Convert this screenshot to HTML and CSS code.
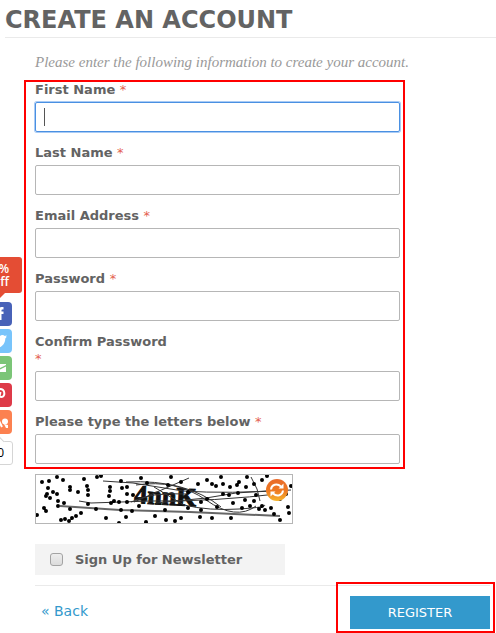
FILE: index.html
```html
<!DOCTYPE html>
<html lang="en">
<head>
<meta charset="UTF-8">
<meta name="viewport" content="width=device-width, initial-scale=1">
<title>Create an Account</title>

<link rel="stylesheet" href="styles.css">

</head>
<body>

<aside class="share">
    <div class="share-offer">%<br>Off</div>
    <a class="share-btn facebook" href="#" aria-label="Facebook">
        <svg viewBox="0 0 24 24"><path d="M10.500 18v-6H8.500V9.500h2V8c0-2 1.500-3 3-3h2v2.500H14.500c-.8 0-1 .3-1 1v1h2V12h-2v6z"/></svg>
    </a>
    <a class="share-btn twitter" href="#" aria-label="Twitter">
        <svg viewBox="0 0 24 24"><path d="M19 7.500l-1.700 1.900c0 6-4.800 9.600-9.300 9.600-2 0-3.500-.6-4.500-1.400 2 0 3.400-.5 4.300-1.300-1.500-.2-2.500-1-2.900-2.300h1.300C4.700 13.300 4 12 4 10.500l1.300.4C4.100 9.800 3.900 8.200 4.700 7c1.700 2 3.900 3 6.600 3.200C10.900 7.500 12.600 6 14.400 6c1 0 1.800.4 2.400 1l2-.7-1.100 1.600z"/></svg>
    </a>
    <a class="share-btn email" href="#" aria-label="Email">
        <svg viewBox="0 0 24 24"><path d="M6 8h12v1l-6 3-6-3zM6 10.500l6 3 6-3V16H6z"/></svg>
    </a>
    <a class="share-btn pinterest" href="#" aria-label="Pinterest">
        <svg viewBox="0 0 24 24"><path class="line" d="M9 13.500C5.500 9.500 8.500 6 12 6c5.500 0 5.500 8 1.500 8-1.500 0-2-.7-2-1.500M12.500 9L10 19"/></svg>
    </a>
    <a class="share-btn other" href="#" aria-label="More">
        <svg viewBox="0 0 24 24"><path class="line" d="M9 7l3 6 2 4"/><circle cx="17" cy="11.500" r="3"/><path d="M16 14l4 1v3h-2z"/></svg>
    </a>
    <div class="share-count">0</div>
</aside>

<main>
    <h1>Create an Account</h1>

    <form class="account">
        <p class="intro">Please enter the following information to create your account.</p>

        <div class="fields marked">
            <div class="field">
                <label for="firstName">First Name <span class="required">*</span></label>
                <input class="active" type="text" id="firstName" name="firstName">
            </div>
            <div class="field">
                <label for="lastName">Last Name <span class="required">*</span></label>
                <input type="text" id="lastName" name="lastName">
            </div>
            <div class="field">
                <label for="email">Email Address <span class="required">*</span></label>
                <input type="email" id="email" name="email">
            </div>
            <div class="field">
                <label for="password">Password <span class="required">*</span></label>
                <input type="password" id="password" name="password">
            </div>
            <div class="field">
                <label for="confirm">Confirm Password<br><span class="required">*</span></label>
                <input type="password" id="confirm" name="confirm">
            </div>
            <div class="field">
                <label for="captcha">Please type the letters below <span class="required">*</span></label>
                <input type="text" id="captcha" name="captcha">
            </div>
        </div>

        <div class="captcha">
            <svg class="captcha-image" viewBox="0 0 256 48">
                <text x="98" y="28" transform="rotate(3 98 28)">4nnK</text>
                <g class="strokes">
                    <path d="M67 6l30 2 50 8q45 3 108-1"/>
                    <path d="M90 7q60-3 95 25"/>
                    <path d="M43 26l12 2 60-2q60 1 135-8"/>
                    <path d="M100 10q40-6 70 15t50 6"/>
                    <path d="M98 27l55-24M120 28l50-5 30-5 30-2"/>
                    <path d="M215 2l6 12 3 12"/>
                    <path d="M95 27q20-10 55-8"/>
                    <path d="M118 12l30 18q25 6 55 4t25-4"/>
                </g>
                <path class="thick" d="M24 31l60 4 70 2 90 4"/>
                <path class="dots" d="M6 7h0M13 6h0M21 2h0M12 13h0M17 17h0M11 19h0M10 21h0M14 23h0M21 19h0M27 5h0M34 12h0M34 15h0M42 17h0M48 4h0M51 11h0M52 20h0M52 15h0M61 2h0M65 1h0M74 12h0M74 16h0M73 21h0M85 6h0M86 13h0M91 12h0M91 19h0M97 20h0M105 3h0M111 8h0M22 26h0M28 28h0M22 31h0M8 33h0M10 36h0M1 40h0M34 34h0M25 45h0M29 44h0M33 46h0M36 43h0M40 41h0M45 38h0M52 29h0M60 34h0M70 43h0M75 28h0M78 26h0M83 27h0M91 27h0M85 35h0M90 42h0M96 36h0M103 31h0M110 47h0M83 48h0M119 41h0M132 10h0M135 2h0M145 7h0M152 17h0M165 27h0M171 24h0M180 11h0M185 2h0M187 19h0M194 12h0M197 28h0M203 7h0M211 2h0M210 12h0M218 9h0M226 5h0M220 20h0M231 1h0M244 24h0M250 19h0M255 11h0M252 32h0M253 38h0M244 45h0M238 39h0M229 35h0M223 34h0M214 31h0M206 33h0M195 43h0M181 32h0M176 43h0M164 42h0M165 35h0M152 33h0M145 43h0M139 46h0M129 35h0M130 45h0M171 5h0M176 9h0M193 20h0M202 18h0M209 25h0M218 26h0M226 31h0M235 33h0M187 9h0M201 10h0M162 9h0"/>
            </svg>
            <button class="captcha-refresh" type="button" aria-label="Reload letters">
                <svg viewBox="0 0 22 22"><path d="M5 10.500c.5-5 6-6.500 10-3M17 11.500c-.5 5-6 6.500-10 3"/><path class="head" d="M17.500 4.500v5h-5zM4.500 17.500v-5h5z"/></svg>
            </button>
        </div>

        <div class="newsletter">
            <input type="checkbox" id="newsletter" name="newsletter">
            <label for="newsletter">Sign Up for Newsletter</label>
        </div>

        <div class="actions">
            <a class="back" href="#">« Back</a>
            <div class="submit marked">
                <button type="submit">REGISTER</button>
            </div>
        </div>
    </form>
</main>

</body>
</html>
```

FILE: styles.css
```css
* {
    box-sizing: border-box;
}

body {
    font-family: Verdana, "DejaVu Sans", sans-serif;
    font-size: 13px;
    margin: 0;
    padding: 0;
    background-color: #fff;
    color: #636363;
}

main {
    padding: 0 0 4px 5px;
}

h1 {
    margin: 0;
    padding: 4px 0 1px;
    font-size: 24px;
    line-height: 32px;
    text-transform: uppercase;
    border-bottom: 1px solid #eaeaea;
}

.account {
    padding: 15px 6px 0 30px;
}

.intro {
    margin: 0;
    height: 28px;
    font-family: "Liberation Serif", serif;
    font-size: 15px;
    font-style: italic;
    line-height: 18px;
    color: #999;
}

/* Red frame around the parts the user has to fill in or press */
.marked {
    position: relative;
}

.marked::after {
    content: "";
    position: absolute;
    border: 2px solid #f00;
    pointer-events: none;
}

.fields {
    display: flex;
    flex-direction: column;
    gap: 12px;
    max-width: 365px;
}

.fields::after {
    inset: -1px -5px -5px -11px;
}

.field label {
    display: block;
    margin-bottom: 4px;
    font-weight: bold;
    line-height: 17px;
}

.required {
    font-weight: normal;
    color: #e4604f;
}

.field input {
    display: block;
    width: 100%;
    height: 30px;
    padding: 0 9px;
    border: 1px solid #b6b6b6;
    border-radius: 2px;
    font: inherit;
    outline: none;
}

.field input.active {
    border-color: #4a90e2;
    box-shadow: 0 0 0 1px #a9cbf5;
    background: linear-gradient(#555, #555) 8px center / 1px 18px no-repeat;
}

.captcha {
    position: relative;
    width: 258px;
    margin-top: 10px;
    border: 1px solid #b6b6b6;
}

.captcha-image {
    display: block;
    width: 100%;
}

.captcha-image text {
    font: bold 26px "Liberation Serif", serif;
    fill: #111;
    stroke: #111;
}

.strokes {
    fill: none;
    stroke: #333;
    stroke-width: 1;
}

.thick {
    fill: none;
    stroke: #666;
    stroke-width: 2;
}

.dots {
    stroke: #000;
    stroke-width: 4;
    stroke-linecap: round;
}

.captcha-refresh {
    position: absolute;
    top: 4px;
    right: 4px;
    width: 22px;
    height: 22px;
    padding: 0;
    border: 0;
    border-radius: 50%;
    background: linear-gradient(#e96a2a, #ee7a22 55%, #f6b52c);
}

.captcha-refresh svg {
    display: block;
    fill: none;
    stroke: #fff;
    stroke-width: 2;
}

.captcha-refresh .head {
    fill: #fff;
    stroke: none;
}

.newsletter {
    display: flex;
    align-items: center;
    gap: 12px;
    max-width: 250px;
    height: 31px;
    margin-top: 20px;
    padding-left: 15px;
    background-color: #f3f3f3;
    font-weight: bold;
}

.newsletter input {
    appearance: none;
    width: 13px;
    height: 13px;
    margin: 0;
    border: 1px solid #a3a3a3;
    border-radius: 3px;
    background: linear-gradient(#ededed, #dcdcdc);
}

.actions {
    display: flex;
    justify-content: space-between;
    margin-top: 10px;
    padding-top: 10px;
    border-top: 1px solid #eaeaea;
}

.back {
    padding: 7px 6px;
    font-size: 14px;
    line-height: 16px;
    color: #3399cc;
    text-decoration: none;
}

.submit::after {
    inset: -14px -5px -4px -14px;
}

.submit button {
    display: block;
    width: 140px;
    height: 33px;
    border: 0;
    background-color: #3399cc;
    color: #fff;
    font: 13px Verdana, "DejaVu Sans", sans-serif;
}

/* Sharing bar, half tucked behind the left edge of the window */
.share {
    position: fixed;
    top: 257px;
    left: -14px;
    display: flex;
    flex-direction: column;
    gap: 3px;
}

.share-offer {
    position: relative;
    width: 36px;
    height: 36px;
    margin-bottom: 6px;
    padding: 5px 13px 0 0;
    border-radius: 3px;
    background-color: #e44d34;
    color: #fff;
    font: 600 12px/13px "Open Sans", sans-serif;
    text-align: right;
}

.share-offer::after {
    content: "";
    position: absolute;
    top: 36px;
    left: 9px;
    border: 5px solid transparent;
    border-top-color: #e44d34;
    border-bottom: 0;
}

.share-btn {
    width: 26px;
    height: 24px;
    border-radius: 4px;
}

.share-btn svg {
    display: block;
    width: 24px;
    height: 24px;
    margin-left: 2px;
    fill: #fff;
}

.share-btn .line {
    fill: none;
    stroke: #fff;
    stroke-width: 2;
}

.facebook {
    background-color: #4862b8;
}

.twitter {
    background-color: #78c4fb;
}

.email {
    background-color: #7bc577;
}

.pinterest {
    background-color: #de3a48;
}

.other {
    background-color: #fc8150;
}

.share-count {
    position: relative;
    width: 27px;
    height: 24px;
    margin-top: 4px;
    padding-right: 8px;
    border: 1px solid #d5d5d5;
    border-radius: 3px;
    background-color: #fff;
    color: #000;
    font: 12px/22px "Open Sans", sans-serif;
    text-align: right;
}

.share-count::before {
    content: "";
    position: absolute;
    top: -4px;
    left: 9px;
    width: 6px;
    height: 6px;
    border: 1px solid #d5d5d5;
    border-width: 1px 0 0 1px;
    background-color: #fff;
    transform: rotate(45deg);
}
```
